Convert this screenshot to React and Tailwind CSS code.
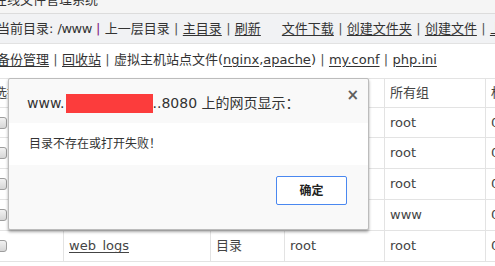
import { Fragment } from "react";

const fontStack = "font-['DejaVu_Sans','Noto_Sans_CJK_SC',sans-serif]";

const rows = [
  { name: "default", type: "目录", owner: "root", group: "root", mode: "0755", h: "h-[30px]" },
  { name: "php", type: "目录", owner: "root", group: "root", mode: "0755", h: "h-[31px]" },
  { name: "rewrite", type: "目录", owner: "root", group: "root", mode: "0755", h: "h-[31px]" },
  { name: "wwwroot", type: "目录", owner: "www", group: "www", mode: "0755", h: "h-[31px]" },
  { name: "web_logs", type: "目录", owner: "root", group: "root", mode: "0755", h: "h-[31px]" },
];

const cellClassName = "flex items-center border-r border-b border-[#e3e3e3] pl-[5px] whitespace-nowrap overflow-hidden";

const Sep = ({ className = "text-[#555]" }) => (
  <span className={`inline-block w-[13px] shrink-0 text-center ${className}`}>|</span>
);

const Link = ({ children }) => <span className="underline underline-offset-2">{children}</span>;

const CheckBox = () => (
  <span className="block w-[13px] h-[12px] rounded-[3px] border border-[#9e9e9e] bg-gradient-to-b from-[#f2f2f2] to-[#d6d6d6]" />
);

const App = () => {
  return (
    <div className={`relative w-[495px] h-[266px] overflow-hidden bg-white text-[#333] ${fontStack}`}>
      <div className="h-[14px] border-b border-[#dcdcdc] bg-[#f5f5f5] overflow-hidden">
        <p className="-mt-[10px] -ml-[6px] text-[13px] leading-[20px] whitespace-nowrap">在线文件管理系统</p>
      </div>

      <div className="flex h-[30px] items-center border-b border-[#e2e2e2] bg-[#f1f2f4] -ml-[3px] text-[13px] whitespace-nowrap">
        <span>
          当前目录: <span className="tracking-[-0.5px]">/www</span>
        </span>
        <Sep className="text-[#80207f]" />
        <span>上一层目录</span>
        <Sep />
        <Link>主目录</Link>
        <Sep />
        <Link>刷新</Link>
        <span className="ml-[21px]">
          <Link>文件下载</Link>
        </span>
        <Sep />
        <Link>创建文件夹</Link>
        <Sep />
        <Link>创建文件</Link>
        <Sep />
        <Link>上传文件</Link>
      </div>

      <div className="flex h-[34px] items-center pb-[3px] -ml-[3px] text-[13px] whitespace-nowrap">
        <Link>备份管理</Link>
        <Sep />
        <Link>回收站</Link>
        <Sep />
        <span>
          虚拟主机站点文件(<Link>nginx</Link>,<Link>apache</Link>)
        </span>
        <Sep />
        <Link>my.conf</Link>
        <Sep />
        <Link>php.ini</Link>
      </div>

      <div className="-ml-[12px] border-t border-[#e3e3e3] grid grid-cols-[76px_147px_74px_100px_101px_80px] text-[13px] text-[#444]">
        <div className={`${cellClassName} h-[29px] pl-[6px]`}>选择</div>
        <div className={`${cellClassName} h-[29px]`}>文件名</div>
        <div className={`${cellClassName} h-[29px]`}>类型</div>
        <div className={`${cellClassName} h-[29px]`}>所有者</div>
        <div className={`${cellClassName} h-[29px]`}>所有组</div>
        <div className={`${cellClassName} h-[29px]`}>权限</div>

        {rows.map((row) => (
          <Fragment key={row.name}>
            <div className={`${cellClassName} ${row.h} pl-[6px]`}>
              <CheckBox />
            </div>
            <div className={`${cellClassName} ${row.h}`}>
              <Link>{row.name}</Link>
            </div>
            <div className={`${cellClassName} ${row.h}`}>{row.type}</div>
            <div className={`${cellClassName} ${row.h}`}>{row.owner}</div>
            <div className={`${cellClassName} ${row.h}`}>{row.group}</div>
            <div className={`${cellClassName} ${row.h}`}>{row.mode}</div>
          </Fragment>
        ))}
      </div>

      {/* alert dialog */}
      <div className="absolute left-[8px] top-[78px] w-[361px] h-[152px] flex flex-col rounded-[2px] border border-[#bcbcbc] bg-[#f9f9f9] shadow-[0_2px_3px_rgba(0,0,0,0.35)]">
        <div className="relative h-[44px] pl-[18px] pt-[14px]">
          <p className="flex items-center text-[14px] leading-[20px] whitespace-nowrap">
            <span>www.</span>
            <span className="inline-block ml-[1px] w-[87px] h-[19px] bg-[#fc3c3c]" />
            <span>..8080 上的网页显示：</span>
          </p>
          <span className="absolute right-[9px] top-[9px] text-[15px] font-bold leading-[15px] text-[#5f5f5f]">×</span>
        </div>
        <div className="h-[42px] flex items-center bg-white pl-[20px] text-[12px]">目录不存在或打开失败！</div>
        <div className="flex flex-1 justify-end pt-[11px] pr-[21px]">
          <button
            type="button"
            className="w-[71px] h-[29px] rounded-[2px] border border-[#4a88f0] bg-white text-[12px] font-bold text-[#222]"
          >
            确定
          </button>
        </div>
      </div>
    </div>
  );
};

export default App;
